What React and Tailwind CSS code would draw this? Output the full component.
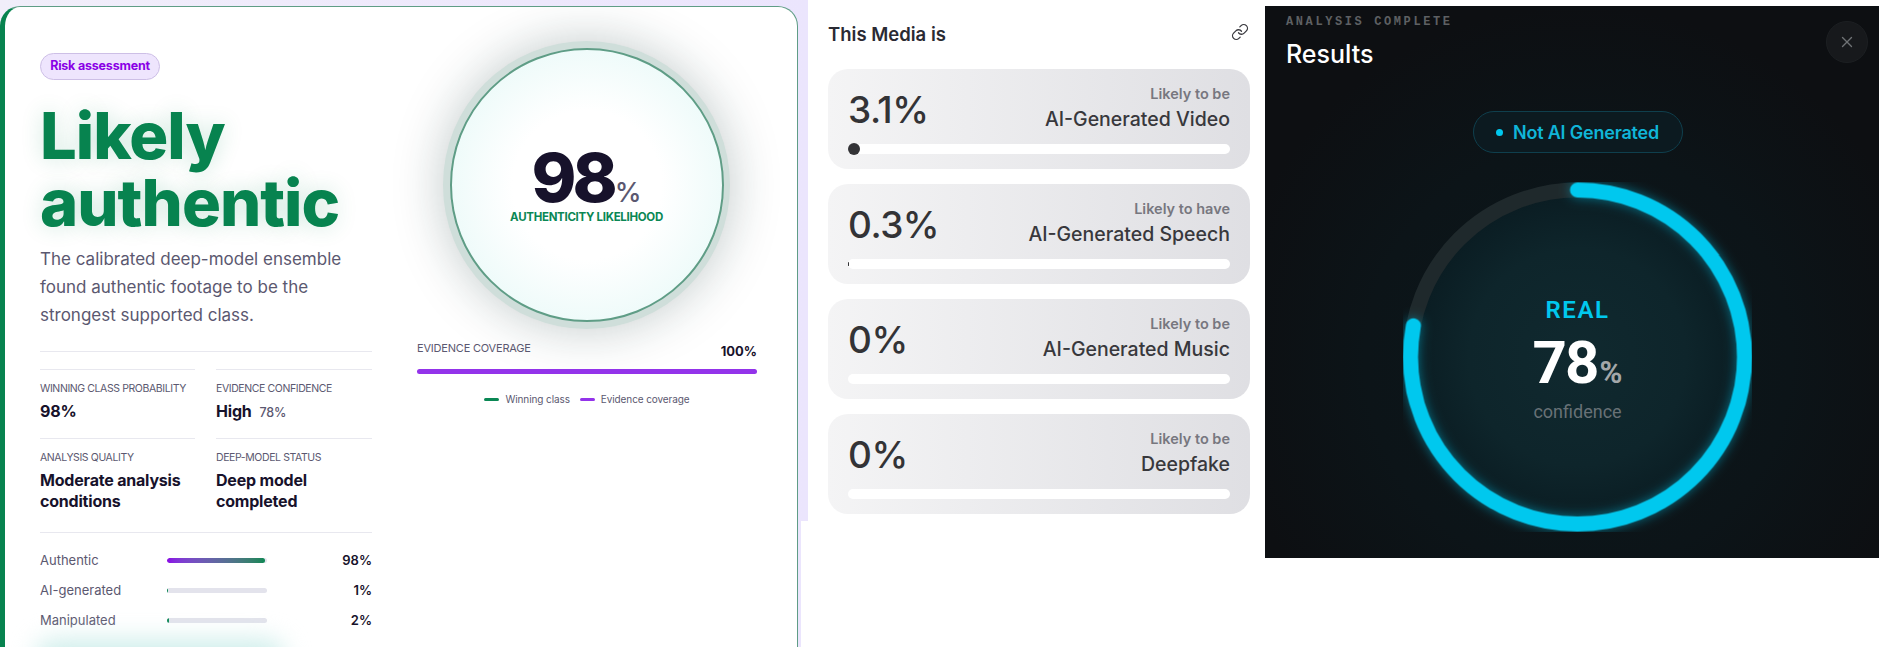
import { Link, X } from "lucide-react"

const stats = [
  { label: "Winning class probability", value: "98%" },
  { label: "Evidence confidence", value: "High", extra: "78%" },
  { label: "Analysis quality", value: "Moderate analysis conditions" },
  { label: "Deep-model status", value: "Deep model completed" },
]

const classes = [
  { name: "Authentic", pct: "98%", fill: "w-[98px] bg-gradient-to-r from-[#8a00e6] to-[#0a8754]" },
  { name: "AI-generated", pct: "1%", fill: "w-[1px] bg-[#0a8754]" },
  { name: "Manipulated", pct: "2%", fill: "w-[2px] bg-[#0a8754]" },
]

const media = [
  { pct: "3.1%", lead: "Likely to be", title: "AI-Generated Video", fill: "w-[12px] h-[12px] -translate-y-px" },
  { pct: "0.3%", lead: "Likely to have", title: "AI-Generated Speech", fill: "w-px h-1 translate-y-[3px]" },
  { pct: "0%", lead: "Likely to be", title: "AI-Generated Music", fill: "w-0" },
  { pct: "0%", lead: "Likely to be", title: "Deepfake", fill: "w-0" },
]

function RiskCard() {
  return (
    <div className="relative flex h-[680px] w-[798px] mt-[6px] overflow-hidden rounded-tl-[20px] rounded-tr-[20px] border border-l-[5px] border-[#5f9d86] border-l-[#07834f] bg-white pl-[35px] pt-[45px] font-['Inter',sans-serif]">
      <div className="w-[332px]">
        <span className="inline-flex h-[27px] w-[120px] items-center justify-center rounded-full border border-[#cdbfe6] bg-[#eee5fd] text-[12.5px] font-bold tracking-[-0.2px] text-[#8a00e6]">
          Risk assessment
        </span>
        <h1 className="mt-[22px] text-[65px] leading-[67px] font-extrabold tracking-[-1px] text-[#07834f] [text-shadow:0_0_22px_rgba(10,135,84,0.2)]">
          Likely<br />authentic
        </h1>
        <p className="mt-[9px] text-[17px] leading-[28px] text-[#5b5870]">
          The calibrated deep-model ensemble found authentic footage to be the strongest supported class.
        </p>
        <div className="mt-[22px] border-t border-[#e8e8ef] pt-[17px]">
          <div className="grid grid-cols-[155px_156px] gap-x-[21px]">
            {stats.map((s) => (
              <div key={s.label} className="border-t border-[#e8e8ef] pt-[12px] pb-[15px]">
                <div className="whitespace-nowrap text-[10.5px] leading-[13px] uppercase tracking-[-0.4px] text-[#5b5870]">{s.label}</div>
                <div className="mt-[6px] text-[16px] leading-[21px] font-bold tracking-[-0.2px] text-[#17122b]">
                  {s.value}
                  {s.extra && <span className="ml-2 text-[12.5px] font-medium text-[#5b5870]">{s.extra}</span>}
                </div>
              </div>
            ))}
          </div>
        </div>
        <div className="mt-[5px] space-y-[12px] border-t border-[#e8e8ef] pt-[19px]">
          {classes.map((c) => (
            <div key={c.name} className="flex h-[18px] items-center">
              <span className="w-[127px] text-[13px] text-[#5b5870]">{c.name}</span>
              <div className="h-[5px] w-[100px] overflow-hidden rounded-full bg-[#e3e3ec]">
                <div className={`h-full rounded-full ${c.fill}`} />
              </div>
              <span className="ml-auto text-[13px] font-semibold text-[#17122b]">{c.pct}</span>
            </div>
          ))}
        </div>
      </div>

      <div className="ml-[45px] w-[340px]">
        <div className="ml-[26px] -mt-[11px] flex h-[288px] w-[287px] items-center justify-center rounded-full bg-[#cfdeda] shadow-[0_0_50px_rgba(20,50,50,0.26)]">
          <div className="flex h-[274px] w-[274px] flex-col items-center rounded-full border-2 border-[#5f9d86] bg-[radial-gradient(circle_closest-side,#ffffff_55%,#effbfa_100%)] pt-[93px]">
            <div className="flex items-baseline">
              <span className="text-[68px] leading-[68px] font-extrabold tracking-[-4px] text-[#17122b]">98</span>
              <span className="ml-[1px] text-[27px] leading-none font-medium text-[#5b5870]">%</span>
            </div>
            <span className="-mt-[2px] text-[11.5px] leading-[16px] font-bold tracking-[-0.3px] text-[#0a8754]">AUTHENTICITY LIKELIHOOD</span>
          </div>
        </div>
        <div className="mt-[12px] flex justify-between">
          <span className="text-[11px] leading-[14px] tracking-[-0.2px] text-[#5b5870]">EVIDENCE COVERAGE</span>
          <span className="mt-[2px] text-[13px] leading-[16px] font-bold text-[#17122b]">100%</span>
        </div>
        <div className="mt-[10px] h-[5px] w-full rounded-full bg-[#9333ea]" />
        <div className="mt-[17px] flex items-center justify-center text-[10px] leading-[16px] tracking-[-0.1px] text-[#5b5870]">
          <span className="mr-[6px] h-[3px] w-[15px] rounded-full bg-[#0a8754]" />
          <span>Winning class</span>
          <span className="ml-[10px] mr-[6px] h-[3px] w-[15px] rounded-full bg-[#9333ea]" />
          <span>Evidence coverage</span>
        </div>
      </div>

      {/* blurred button peeking in at the bottom */}
      <div className="absolute left-[30px] top-[632px] h-[40px] w-[250px] rounded-full bg-[#cfeeeb] blur-[12px]" />
    </div>
  )
}

function MediaPanel() {
  return (
    <div className="w-[457px] pl-[20px] pr-[15px] font-['Inter',sans-serif]">
      <div className="flex h-[69px] items-start justify-between pt-[22px] pr-[1px]">
        <h2 className="text-[18.5px] leading-[24px] font-semibold text-[#2a2a33]">This Media is</h2>
        <Link size={18} strokeWidth={1.7} className="mt-[1px] text-[#3a3a3f]" />
      </div>
      <div className="space-y-[15px]">
        {media.map((m) => (
          <div key={m.title} className="h-[100px] rounded-[20px] bg-gradient-to-r from-[#f4f4f5] to-[#dfdfe3] px-[20px] pt-[11px]">
            <div className="flex h-[64px] items-start justify-between">
              <span className="mt-[11px] text-[37px] leading-[37px] font-medium tracking-[-0.5px] text-[#333336]">{m.pct}</span>
              <div className="mt-[4px] text-right">
                <div className="text-[14.5px] leading-[20px] font-semibold text-[#77777f]">{m.lead}</div>
                <div className="mt-[2px] text-[19.5px] leading-[26px] font-medium text-[#38383c]">{m.title}</div>
              </div>
            </div>
            <div className="h-[10px] rounded-full bg-white">
              <div className={`rounded-full bg-[#333336] ${m.fill}`} />
            </div>
          </div>
        ))}
      </div>
    </div>
  )
}

function ResultsPanel() {
  return (
    <div className="h-[552px] w-[614px] mt-[6px] bg-[radial-gradient(circle_at_51%_64%,#0b171b_0%,#0c1418_45%,#0d0f12_75%)] font-['Inter',sans-serif]">
      <div className="flex justify-between pl-[21px] pr-[11px] pt-[9px]">
        <div>
          <div className="font-['Liberation_Mono',monospace] text-[12px] leading-[14px] font-bold tracking-[2.6px] text-[#5e6063]">ANALYSIS COMPLETE</div>
          <div className="mt-[9px] text-[25px] leading-[32px] font-medium text-white">Results</div>
        </div>
        <button className="mt-[6px] flex h-[42px] w-[42px] items-center justify-center rounded-full border border-[#1c1f22] bg-[#17191c] text-[#6f7275]">
          <X size={18} strokeWidth={1.8} />
        </button>
      </div>
      <div className="flex flex-col items-center pl-[11px]">
        <div className="mt-[41px] flex h-[42px] w-[210px] items-center justify-center gap-[10px] rounded-full border border-[#0f3f4d] bg-[#0c1a20] text-[18px] font-semibold tracking-[-0.2px] text-[#10b5d8]">
          <span className="h-[7px] w-[7px] rounded-full bg-[#00c8ee]" />
          Not AI Generated
        </div>
        <div className="relative mt-[29px] flex h-[350px] w-[349px] flex-col items-center justify-center">
          <svg viewBox="0 0 349 350" className="absolute inset-0 h-full w-full">
            <defs>
              <radialGradient id="core">
                <stop offset="0%" stopColor="#10292f" />
                <stop offset="65%" stopColor="#0e252b" />
                <stop offset="100%" stopColor="#0a1c22" />
              </radialGradient>
            </defs>
            <circle cx="174.5" cy="175" r="167" fill="url(#core)" />
            <circle cx="174.5" cy="175" r="167" fill="none" stroke="#1f292c" strokeWidth="15" />
            <circle
              cx="174.5"
              cy="175"
              r="167"
              fill="none"
              stroke="#00c8ee"
              strokeWidth="15"
              strokeLinecap="round"
              strokeDasharray="818 1049"
              transform="rotate(-90 174.5 175)"
              className="drop-shadow-[0_0_6px_rgba(0,200,238,0.5)]"
            />
          </svg>
          <div className="relative mt-[6px] flex flex-col items-center font-['Roboto',sans-serif]">
            <span className="text-[24px] leading-[28px] font-semibold tracking-[1.5px] text-[#00c8ee]">REAL</span>
            <div className="mt-[9px] flex items-baseline">
              <span className="text-[60px] leading-[60px] font-bold tracking-[-2px] text-white">78</span>
              <span className="ml-[2px] text-[31px] leading-none font-bold text-[#a3a7a9]">%</span>
            </div>
            <span className="mt-[7px] text-[18px] leading-[24px] text-[#687176]">confidence</span>
          </div>
        </div>
      </div>
    </div>
  )
}

export default function App() {
  return (
    <div className="flex h-[647px] w-[1879px] items-start overflow-hidden bg-white">
      <div className="h-[647px] w-[808px] shrink-0 bg-[linear-gradient(to_right,#f1eefa_0%,#ebe5fd_100%)] [clip-path:polygon(0_0,100%_0,100%_521px,801px_521px,801px_100%,0_100%)]">
        <RiskCard />
      </div>
      <MediaPanel />
      <ResultsPanel />
    </div>
  )
}
